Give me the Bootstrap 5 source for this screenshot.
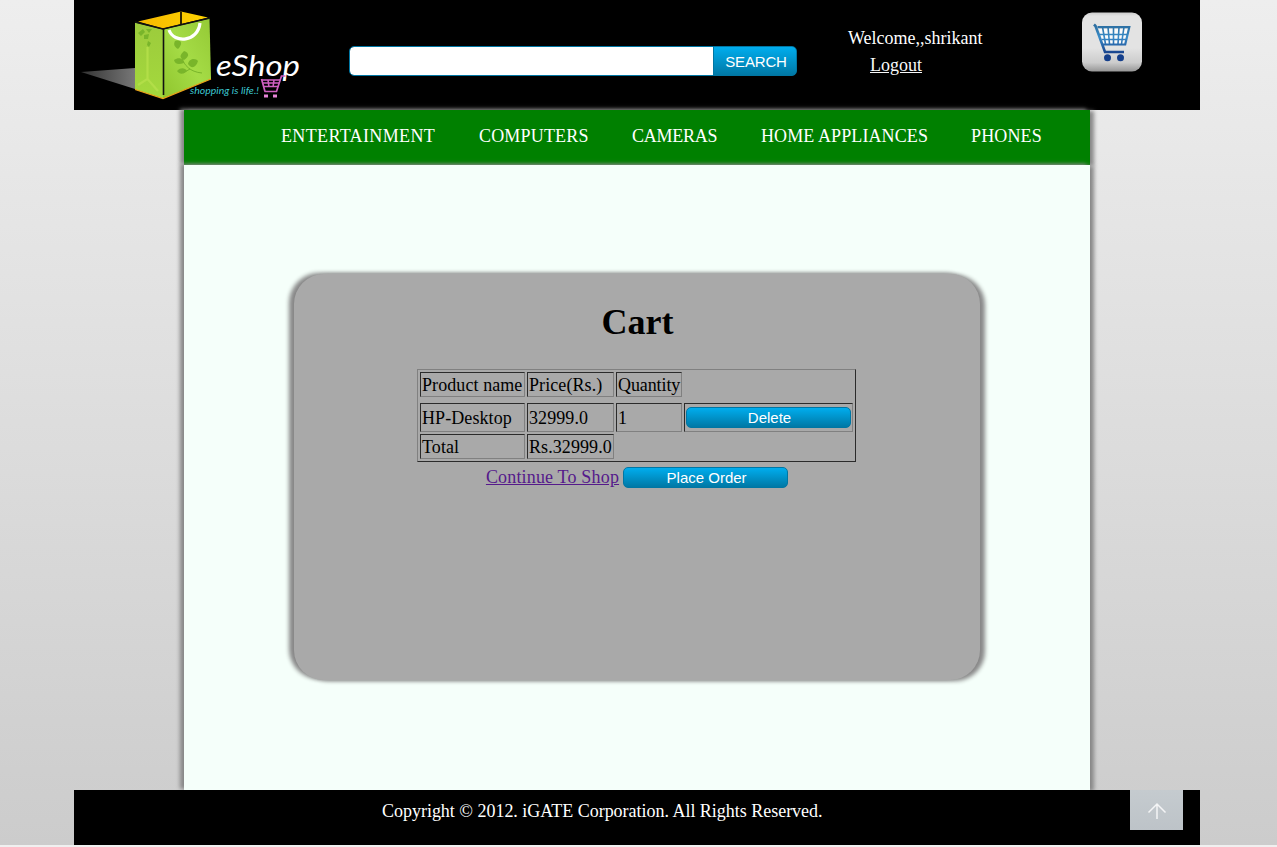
<!DOCTYPE html>
<html lang="en">
<head>
<meta charset="utf-8">
<title>eShop - Cart</title>
<link href="https://cdn.jsdelivr.net/npm/bootstrap@5.3.0/dist/css/bootstrap.min.css" rel="stylesheet">
<style>
html{background:#f0f0f0;height:100%}
body{font-family:"Liberation Serif",serif;font-size:18px;line-height:27px;color:#000;height:845px;background:linear-gradient(#eee,#ccc);overflow:hidden}
.shell{width:1126px;margin-left:74px}
.topbar{height:110px;background:#000}
.brand-logo{width:275px;height:110px}
.search-group{width:448px;height:30px;margin-top:46px}
.search-group .form-control{border:1px solid #0076a3;border-radius:5px 0 0 5px;padding:0 8px;height:30px;min-height:0}
.blue-btn{font-family:"Liberation Sans",sans-serif;font-size:15px;line-height:1;color:#fff;padding:0 0 0 2px;border:1px solid #0076a3;border-radius:5px;background:linear-gradient(#00adee,#0078a5)}
.blue-btn:hover{color:#fff}
.search-group .blue-btn{width:84px;border-radius:0 5px 5px 0;letter-spacing:-.15px}
.account{width:285px;padding:25px 0 0 51px}
.account a{margin-left:22px}
.cart-link{margin-top:12px;height:60px}
.soft-edge{box-shadow:4px 1px 4px #888,-4px -1px 4px #888}
.page-col{width:906px}
.main-nav{height:55px;background:green;padding:0 0 2px 97px;gap:44px;white-space:nowrap}
.main-nav .nav-link{color:#fff;padding:0;width:var(--w);letter-spacing:var(--ls)}
.nav-ent{--w:154px;--ls:.36px}
.nav-comp{--w:109px;--ls:.18px}
.nav-cam{--w:85px;--ls:-.25px}
.nav-home{--w:166px;--ls:.1px}
.nav-phone{--w:72px;--ls:.15px}
.content-area{height:625px;background:#f5fffa;padding-top:109px}
.cart-panel{width:686px;height:406px;background:#a9a9a9;border-radius:30px;box-shadow:5px 1px 4px #888,-5px -1px 4px #888}
.cart-panel h1{font-size:36px;font-weight:700;line-height:42px;padding:27px 0 0 1px;margin-bottom:26px}
.cart-table{width:439px;table-layout:fixed;border-collapse:separate;border-spacing:2px;border:1px solid;border-color:#808080 #2b2b2b #2b2b2b #808080;line-height:22px;text-align:left;margin-left:123px;white-space:nowrap}
.cart-table td{border:1px solid;border-color:#2b2b2b #808080 #808080 #2b2b2b;padding:0 1px;vertical-align:middle;letter-spacing:.08px}
.cart-table .gap-row td{border:0;padding:0;height:0}
.cart-table td:nth-child(3){letter-spacing:-.1px}
.wide-btn{width:165px;height:21px;display:block}
.cart-actions{height:28px;gap:4px;margin-top:1px}
.cart-actions a{color:#551a8b;letter-spacing:.17px}
.page-foot{height:55px;background:#000;color:#fff}
.copyright{padding:8px 0 0 308px;letter-spacing:-.02px}
.to-top{width:53px;height:40px;margin-right:17px;padding-top:2px;background:linear-gradient(#c5cbcf,#bdc3c8)}
</style>
<script src="https://cdn.jsdelivr.net/npm/bootstrap@5.3.0/dist/js/bootstrap.bundle.min.js"></script>
</head>
<body>
<div class="shell">
<header class="topbar d-flex text-white">
<svg class="brand-logo flex-shrink-0" viewBox="74 0 275 110">
<defs>
<linearGradient id="shade"><stop offset="0" stop-color="#333"/><stop offset="1" stop-color="#777"/></linearGradient>
<linearGradient id="side" x2="0" y2="1"><stop offset="0" stop-color="#9ccb3c"/><stop offset="1" stop-color="#a4d93d"/></linearGradient>
<linearGradient id="front" x1="1" x2="0" y2="1"><stop offset="0" stop-color="#94c935"/><stop offset=".5" stop-color="#a5dc46"/><stop offset="1" stop-color="#8fc52d"/></linearGradient>
<linearGradient id="gold"><stop offset="0" stop-color="#f5b800"/><stop offset="1" stop-color="#ffd400"/></linearGradient>
</defs>
<path d="M81 72 135 68V89Z" fill="url(#shade)"/>
<path d="M138 21.500 181 11.500 208 17.500 163 28.500Z" fill="url(#gold)"/>
<path d="M181 11.500V24" stroke="#1a1500" stroke-width="1.800"/>
<path d="M135 22.500 163 29.500V98.500L135 89.500Z" fill="url(#side)"/>
<path d="M163 29.500 209.500 18.500 211 79 163 98.500Z" fill="url(#front)"/>
<path d="M135 22 163 29 210 18" fill="none" stroke="#111" stroke-width="1.600"/>
<path d="M163.500 29V95" stroke="#111" stroke-width="1.600"/>
<path d="M135 89.500 163 98.500 211 79" fill="none" stroke="#eda017" stroke-width="1.200"/>
<path d="M147.500 47V79L138 85M147.500 79 158 91" fill="none" stroke="#b2de48" stroke-width="2.200"/>
<path d="M169 30C174 44 198 42 200 23" fill="none" stroke="#fff" stroke-width="3.200"/>
<g fill="#79b52a">
<path d="M175 41C182 39 183 44 178 49 173 46 174 43 175 41Z"/>
<path d="M184 51C190 53 189 57 184 60 178 57 181 54 184 51Z"/>
<path d="M174 60C180 56 184 60 184 63 178 65 175 64 174 60Z"/>
<path d="M188 64C189 58 196 58 198 61 196 68 191 69 188 64Z"/>
<path d="M177 71C181 67 185 68 187 71 183 75 179 74 177 71Z"/>
<path d="M138 33 143 29 145 32 141 36ZM146 29 152 29 149 33ZM144 35 149 34 148 39 144 39ZM148 41 151 43 149 47 147 45Z"/>
</g>
<path d="M182 58C184 65 190 72 202 73M183 73 190 69" fill="none" stroke="#79b52a"/>
<text x="216" y="76" textLength="84" lengthAdjust="spacingAndGlyphs" font-family="Lato" font-style="italic" font-size="28" fill="#fff">eShop</text>
<text x="190" y="93.500" textLength="69" lengthAdjust="spacingAndGlyphs" font-family="Lato" font-style="italic" font-size="9" fill="#3cc8d2">shopping is life.!</text>
<path d="M285.500 76H281.500L276.500 91.500H264.500M261.500 79 265 91.500" fill="none" stroke="#cf5fc0" stroke-width="1.700"/>
<path d="M262 80H280M263 83H279M264 86.500H278M268 80 269 87M274 80 273 87" fill="none" stroke="#cf5fc0" stroke-width="1.600"/>
<path d="M264 94.500H268V97.500H264ZM273 94.500H277V97.500H273Z" fill="#e884d8"/>
</svg>
<form class="search-group input-group flex-nowrap flex-shrink-0" onsubmit="return false">
<input class="form-control" type="text" aria-label="Search">
<button class="btn blue-btn">SEARCH</button>
</form>
<div class="account flex-shrink-0">
<div>Welcome,,shrikant</div>
<a class="link-light text-decoration-underline" href="#">Logout</a>
</div>
<a class="cart-link" href="#" aria-label="Cart">
<svg class="d-block" width="60" height="60" viewBox="0 0 60 60">
<defs>
<linearGradient id="tile" x2="0" y2="1"><stop offset="0" stop-color="#ccc"/><stop offset=".06" stop-color="#e3e3e3"/><stop offset=".6" stop-color="#e3e3e3"/><stop offset=".85" stop-color="#ccc"/><stop offset="1" stop-color="#969696"/></linearGradient>
<linearGradient id="cartblue" gradientUnits="userSpaceOnUse" x1="0" y1="12" x2="0" y2="50"><stop offset="0" stop-color="#2b6b9c"/><stop offset=".35" stop-color="#388bc8"/><stop offset=".8" stop-color="#173e88"/><stop offset="1" stop-color="#10408f"/></linearGradient>
</defs>
<rect y=".5" width="60" height="59" rx="10" fill="url(#tile)"/>
<path d="M17 17H46L42 32H21" fill="#fafafa"/>
<g fill="none" stroke="url(#cartblue)" stroke-width="2.200"><path stroke-width="2.600" d="M12 12.500 13.500 14 23 40H42"/><path d="M15.500 15.200H47.300L43.200 32.500H20.500"/><path stroke-width="1.300" d="M17 22.500H45M20 27.500H44"/><path stroke-width="1.600" d="M20.500 15 23.500 32M26 15 27.500 32M31.500 15V32M37 15 36 32M42 15 39.500 32"/></g>
<g fill="#153f8b"><circle cx="25.500" cy="45.700" r="3.500"/><circle cx="38.500" cy="45.700" r="3.500"/></g>
</svg>
</a>
</header>
<div class="page-col mx-auto">
<nav class="main-nav soft-edge d-flex align-items-center">
<a class="nav-link nav-ent" href="#">ENTERTAINMENT</a>
<a class="nav-link nav-comp" href="#">COMPUTERS</a>
<a class="nav-link nav-cam" href="#">CAMERAS</a>
<a class="nav-link nav-home" href="#">HOME APPLIANCES</a>
<a class="nav-link nav-phone" href="#">PHONES</a>
</nav>
<main class="content-area soft-edge">
<section class="cart-panel mx-auto text-center">
<h1>Cart</h1>
<table class="cart-table">
<colgroup><col style="width:105px"><col style="width:87px"><col style="width:66px"><col style="width:169px"></colgroup>
<tr style="height:25px"><td>Product name</td><td>Price(Rs.)</td><td>Quantity</td></tr>
<tr class="gap-row"><td></td></tr>
<tr class="gap-row"><td></td></tr>
<tr style="height:29px"><td>HP-Desktop</td><td>32999.0</td><td>1</td><td><button class="btn blue-btn wide-btn">Delete</button></td></tr>
<tr style="height:25px"><td>Total</td><td>Rs.32999.0</td></tr>
</table>
<div class="cart-actions d-flex justify-content-center align-items-center">
<a href="#">Continue To Shop</a>
<button class="btn blue-btn wide-btn">Place Order</button>
</div>
</section>
</main>
</div>
<footer class="page-foot position-relative d-flex justify-content-between align-items-start">
<div class="copyright">Copyright © 2012. iGATE Corporation. All Rights Reserved.</div>
<a class="to-top d-flex align-items-center justify-content-center" href="#" aria-label="Back to top">
<svg width="20" height="18" viewBox="0 0 20 18"><path d="M10 17V2M1.500 10.500 10 2 18.500 10.500" fill="none" stroke="#f4f5f6" stroke-width="1.500"/></svg>
</a>
</footer>
</div>
</body>
</html>
